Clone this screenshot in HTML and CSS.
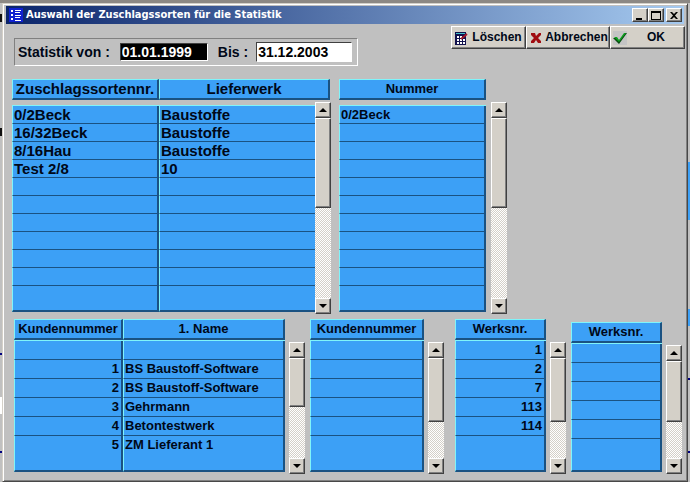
FILE: index.html
```html
<!DOCTYPE html>
<html lang="de">
<head>
<meta charset="utf-8">
<title>Auswahl der Zuschlagssorten für die Statistik</title>
<link rel="stylesheet" href="styles.css">
</head>
<body>
<main class="window">
  <header class="titlebar">
    <svg class="app-icon" viewBox="0 0 14 14" aria-hidden="true"><path fill="#1020d0" d="M0 0h14v14H0z"/><path fill="#fff" d="M2 2h2v2H2zM2 6h2v2H2zM2 10h2v2H2zM6 2h6v1H6zM6 4h5v1H6zM6 7h6v1H6zM6 9h5v1H6zM6 12h6v1H6z"/></svg>
    <h1>Auswahl der Zuschlagssorten für die Statistik</h1>
    <div class="caption-buttons">
      <button type="button" aria-label="Minimieren"><svg viewBox="0 0 12 11"><path d="M2 8h6v2H2z"/></svg></button>
      <button type="button" aria-label="Maximieren"><svg viewBox="0 0 12 11"><path fill-rule="evenodd" d="M1 1h10v9H1zM2 3v6h8V3z"/></svg></button>
      <button type="button" class="close" aria-label="Schließen"><svg viewBox="0 0 12 11"><path d="M2 2h2l2 2 2-2h2L7 5.500l3 3.500H8L6 7 4 9H2l3-3.500z"/></svg></button>
    </div>
  </header>

  <div class="toolbar">
    <form class="period">
      <label for="von">Statistik von :</label>
      <input id="von" class="from" type="text" value="01.01.1999">
      <label for="bis">Bis :</label>
      <input id="bis" class="to" type="text" value="31.12.2003">
    </form>
    <div class="actions">
      <button type="button"><svg class="icon" viewBox="0 0 16 16" aria-hidden="true"><path fill="#10104c" d="M2 2h11v13H2z"/><path fill="#40c0c8" d="M3 3h9v1H3z"/><path fill="#fff" d="M4 6h2v2H4zM7 6h2v2H7zM4 9h2v2H4zM7 9h2v2H7zM10 9h2v2h-2zM4 12h2v2H4zM7 12h2v2H7zM10 12h2v2h-2z"/><path stroke="#a01828" stroke-width="2" d="M8 9l6-5"/></svg><span>Löschen</span></button>
      <button type="button"><svg class="icon" viewBox="0 0 16 16" aria-hidden="true"><path fill="#a00c10" d="M3 3h4l1 3 3-3h2v2l-3 3 3 3v2h-3l-2-3-2 3H3v-2l3-3-3-3z"/></svg><span>Abbrechen</span></button>
      <button type="button"><svg class="icon" viewBox="0 0 16 16" aria-hidden="true"><path fill="#c4c4c4" d="M1 1h14v14H1z"/><path fill="#084c10" d="M1 8l4 0 2 3 6-8 2 0-8 11z"/><path fill="#10a020" d="M2 7l3 0 2 3 5-7 2 0-7 9z"/></svg><span>OK</span></button>
    </div>
  </div>

  <div class="upper">
    <section class="panel joined">
      <table class="list tall sorts">
        <thead><tr><th>Zuschlagssortennr.</th><th>Lieferwerk</th></tr></thead>
        <tbody>
          <tr><td>0/2Beck</td><td>Baustoffe</td></tr>
          <tr><td>16/32Beck</td><td>Baustoffe</td></tr>
          <tr><td>8/16Hau</td><td>Baustoffe</td></tr>
          <tr><td>Test 2/8</td><td>10</td></tr>
          <tr><td></td><td></td></tr>
          <tr><td></td><td></td></tr>
          <tr><td></td><td></td></tr>
          <tr><td></td><td></td></tr>
          <tr><td></td><td></td></tr>
          <tr><td></td><td></td></tr>
          <tr><td></td><td></td></tr>
        </tbody>
      </table>
      <div class="scroll"><button type="button" class="up" aria-label="Nach oben"></button><div class="track"><div class="thumb" style="height:50%"></div></div><button type="button" class="down" aria-label="Nach unten"></button></div>
    </section>

    <section class="panel">
      <table class="list tall">
        <thead><tr><th>Nummer</th></tr></thead>
        <tbody>
          <tr><td>0/2Beck</td></tr>
          <tr><td></td></tr>
          <tr><td></td></tr>
          <tr><td></td></tr>
          <tr><td></td></tr>
          <tr><td></td></tr>
          <tr><td></td></tr>
          <tr><td></td></tr>
          <tr><td></td></tr>
          <tr><td></td></tr>
          <tr><td></td></tr>
        </tbody>
      </table>
      <div class="scroll"><button type="button" class="up" aria-label="Nach oben"></button><div class="track"><div class="thumb" style="height:50%"></div></div><button type="button" class="down" aria-label="Nach unten"></button></div>
    </section>
  </div>

  <div class="lower">
    <section class="panel">
      <table class="list customers">
        <thead><tr><th>Kundennummer</th><th>1. Name</th></tr></thead>
        <tbody>
          <tr><td class="num"></td><td></td></tr>
          <tr><td class="num">1</td><td>BS Baustoff-Software</td></tr>
          <tr><td class="num">2</td><td>BS Baustoff-Software</td></tr>
          <tr><td class="num">3</td><td>Gehrmann</td></tr>
          <tr><td class="num">4</td><td>Betontestwerk</td></tr>
          <tr><td class="num">5</td><td>ZM Lieferant 1</td></tr>
        </tbody>
      </table>
      <div class="scroll"><button type="button" class="up" aria-label="Nach oben"></button><div class="track"><div class="thumb" style="height:49%"></div></div><button type="button" class="down" aria-label="Nach unten"></button></div>
    </section>

    <section class="panel">
      <table class="list">
        <thead><tr><th>Kundennummer</th></tr></thead>
        <tbody>
          <tr><td></td></tr>
          <tr><td></td></tr>
          <tr><td></td></tr>
          <tr><td></td></tr>
          <tr><td></td></tr>
          <tr><td></td></tr>
        </tbody>
      </table>
      <div class="scroll"><button type="button" class="up" aria-label="Nach oben"></button><div class="track"><div class="thumb" style="height:64%"></div></div><button type="button" class="down" aria-label="Nach unten"></button></div>
    </section>

    <section class="panel plants">
      <table class="list">
        <thead><tr><th>Werksnr.</th></tr></thead>
        <tbody>
          <tr><td class="num">1</td></tr>
          <tr><td class="num">2</td></tr>
          <tr><td class="num">7</td></tr>
          <tr><td class="num">113</td></tr>
          <tr><td class="num">114</td></tr>
          <tr><td class="num"></td></tr>
        </tbody>
      </table>
      <div class="scroll"><button type="button" class="up" aria-label="Nach oben"></button><div class="track"><div class="thumb" style="height:64%"></div></div><button type="button" class="down" aria-label="Nach unten"></button></div>
    </section>

    <section class="panel lowered">
      <table class="list">
        <thead><tr><th>Werksnr.</th></tr></thead>
        <tbody>
          <tr><td></td></tr>
          <tr><td></td></tr>
          <tr><td></td></tr>
          <tr><td></td></tr>
          <tr><td></td></tr>
          <tr><td></td></tr>
        </tbody>
      </table>
      <div class="scroll"><button type="button" class="up" aria-label="Nach oben"></button><div class="track"><div class="thumb" style="height:63%"></div></div><button type="button" class="down" aria-label="Nach unten"></button></div>
    </section>
  </div>
</main>
</body>
</html>
```
FILE: styles.css
```css
:root {
  --face: #d4d0c8;
  --gray: #c0c0c0;
  --blue: #3ca0f6;
  --blue-dark: #1a5282;
  --blue-light: #80f4fa;
}

* { box-sizing: border-box; }

/* The desktop shows through as a thin strip around the window. */
body {
  margin: 0;
  min-height: 100vh;
  padding: 3px 2px 0;
  display: flex;
  flex-direction: column;
  font: bold 13px/17px "Liberation Sans", Arial, sans-serif;
  color: #000818;
  background:
    linear-gradient(#8c8884, #8c8884) 0 0 / 100% 3px no-repeat,
    linear-gradient(#101010, #101010) 0 14px / 2px 8px no-repeat,
    linear-gradient(#101010, #101010) 0 128px / 2px 8px no-repeat,
    linear-gradient(#000080, #000080) 0 353px / 2px 2px no-repeat,
    linear-gradient(#fff, #fff) 0 397px / 2px 17px no-repeat,
    linear-gradient(#000080, #000080) 0 451px / 2px 2px no-repeat,
    linear-gradient(var(--blue), var(--blue)) 100% 162px / 2px 58px no-repeat,
    linear-gradient(var(--blue), var(--blue)) 100% 309px / 2px 17px no-repeat,
    linear-gradient(#000080, #000080) 100% 378px / 2px 2px no-repeat,
    linear-gradient(#000080, #000080) 100% 451px / 2px 2px no-repeat,
    var(--gray);
}

button {
  padding: 0;
  font: inherit;
  color: inherit;
  background: var(--face);
  border: 1px solid;
  border-color: #fff #404040 #404040 #fff;
  box-shadow: inset -1px -1px #808080;
}

.window {
  flex: 1;
  display: flex;
  flex-direction: column;
  padding: 1px 0 0 1px;
  background: var(--gray);
  border: 1px solid;
  border-color: var(--face) #484848 #484848 var(--face);
  box-shadow: inset 1px 1px #fff, inset -1px -1px #808080;
}

.titlebar {
  display: flex;
  align-items: center;
  height: 18px;
  margin: 1px 3px 0 2px;
  padding: 0 2px 0 3px;
  background: linear-gradient(90deg, #0a246a, #a6caf0);
}

.app-icon { width: 14px; height: 14px; }

h1 {
  flex: 1;
  margin: 0 0 0 3px;
  font: bold 11px/18px "DejaVu Sans Condensed", Tahoma, sans-serif;
  color: #fff;
}

.caption-buttons { display: flex; }

.caption-buttons button {
  display: grid;
  place-items: center;
  width: 16px;
  height: 14px;
}

.caption-buttons svg { width: 12px; height: 11px; }
.caption-buttons .close { margin-left: 2px; }

.toolbar {
  display: flex;
  justify-content: space-between;
  align-items: flex-start;
  padding: 2px 2px 0 10px;
}

.period {
  display: flex;
  align-items: center;
  height: 28px;
  margin-top: 12px;
  padding: 0 5px 0 3px;
  font-size: 14px;
  border: 1px solid;
  border-color: #808080 #fff #fff #808080;
}

.period label { white-space: nowrap; }

.period input {
  height: 18px;
  margin: 0 10px;
  padding: 0 1px;
  font: inherit;
  color: #000;
  background: #fff;
  border: 1px solid;
  border-color: #404040 #fff #fff #404040;
}

.period .from { width: 88px; color: #fff; background: #000; }
.period .to { width: 96px; height: 20px; margin: 0 0 0 8px; }

.actions { display: flex; }

.actions button {
  display: flex;
  align-items: center;
  width: 75px;
  height: 23px;
  padding-left: 1px;
  font-size: 12px;
}

.actions button:nth-child(2) { width: 84px; }
.actions .icon { flex: none; width: 16px; height: 16px; }
.actions span { flex: 1; text-align: center; }

.upper {
  display: grid;
  grid-template-columns: 319fr 168fr 169fr;
  gap: 8px;
  margin: 13px 3px 0 8px;
}

.lower {
  display: grid;
  grid-template-columns: 291fr 134fr 117fr 111fr;
  gap: 5px;
  margin: 5px 5px 4px 10px;
}

.panel { display: flex; gap: 4px; }
.upper .panel { gap: 5px; }
.upper .joined { gap: 0; }
.plants { padding-left: 6px; }
.lowered { padding-top: 3px; }

/* Lists: every column is a raised strip, rows are split by a thin line. */
.list {
  --columns: 1fr;
  --row: 19px;
  flex: 1;
  min-width: 0;
  margin-bottom: 2px;
  display: flex;
  flex-direction: column;
}

.list thead, .list tbody { display: block; }
.list tr { display: grid; grid-template-columns: var(--columns); }
.list tbody { flex: 1; display: flex; flex-direction: column; border-top: 1px solid var(--blue-light); }

.list th, .list td {
  padding: 0 1px;
  text-align: left;
  white-space: nowrap;
  background: var(--blue);
  border: 0 solid var(--blue-dark);
  border-width: 0 2px 1px 1px;
  border-left-color: var(--blue-light);
}

.list th {
  height: 21px;
  text-align: center;
  border-width: 1px 2px 2px 1px;
  border-top-color: var(--blue-light);
}

.list tbody tr { flex: none; height: var(--row); }
.list tbody tr:last-child { flex: 1 0 auto; height: auto; min-height: 33px; }
.list tr:last-child td { border-bottom-width: 2px; }
.list .num { padding-right: 2px; text-align: right; }

.tall { --row: 18px; gap: 5px; }
.tall tbody tr:last-child { min-height: 26px; }
.list thead tr:last-child th { border-bottom-width: 2px; }

.sorts { --columns: 147fr 156fr; font-size: 15px; }
.sorts thead { margin-right: -15px; }
.sorts thead tr { grid-template-columns: 147fr 171fr; }
.joined td:last-child { border-right-width: 0; }
.customers { --columns: 109fr 162fr; }

.scroll {
  flex: none;
  display: flex;
  flex-direction: column;
  width: 16px;
  margin-top: 23px;
}

.scroll button {
  display: grid;
  place-items: center;
  height: 16px;
}

.scroll button::before {
  content: "";
  border: 4px solid transparent;
  border-top-width: 0;
  border-bottom-color: #000;
}

.scroll .down::before {
  border-width: 4px 4px 0;
  border-color: #000 transparent transparent;
}

.track {
  flex: 1;
  background: repeating-conic-gradient(#fff 0 25%, var(--face) 0 50%) 0 0 / 2px 2px;
}

.thumb {
  background: var(--face);
  border: 1px solid;
  border-color: #fff #404040 #404040 #fff;
  box-shadow: inset -1px -1px #808080;
}
```
